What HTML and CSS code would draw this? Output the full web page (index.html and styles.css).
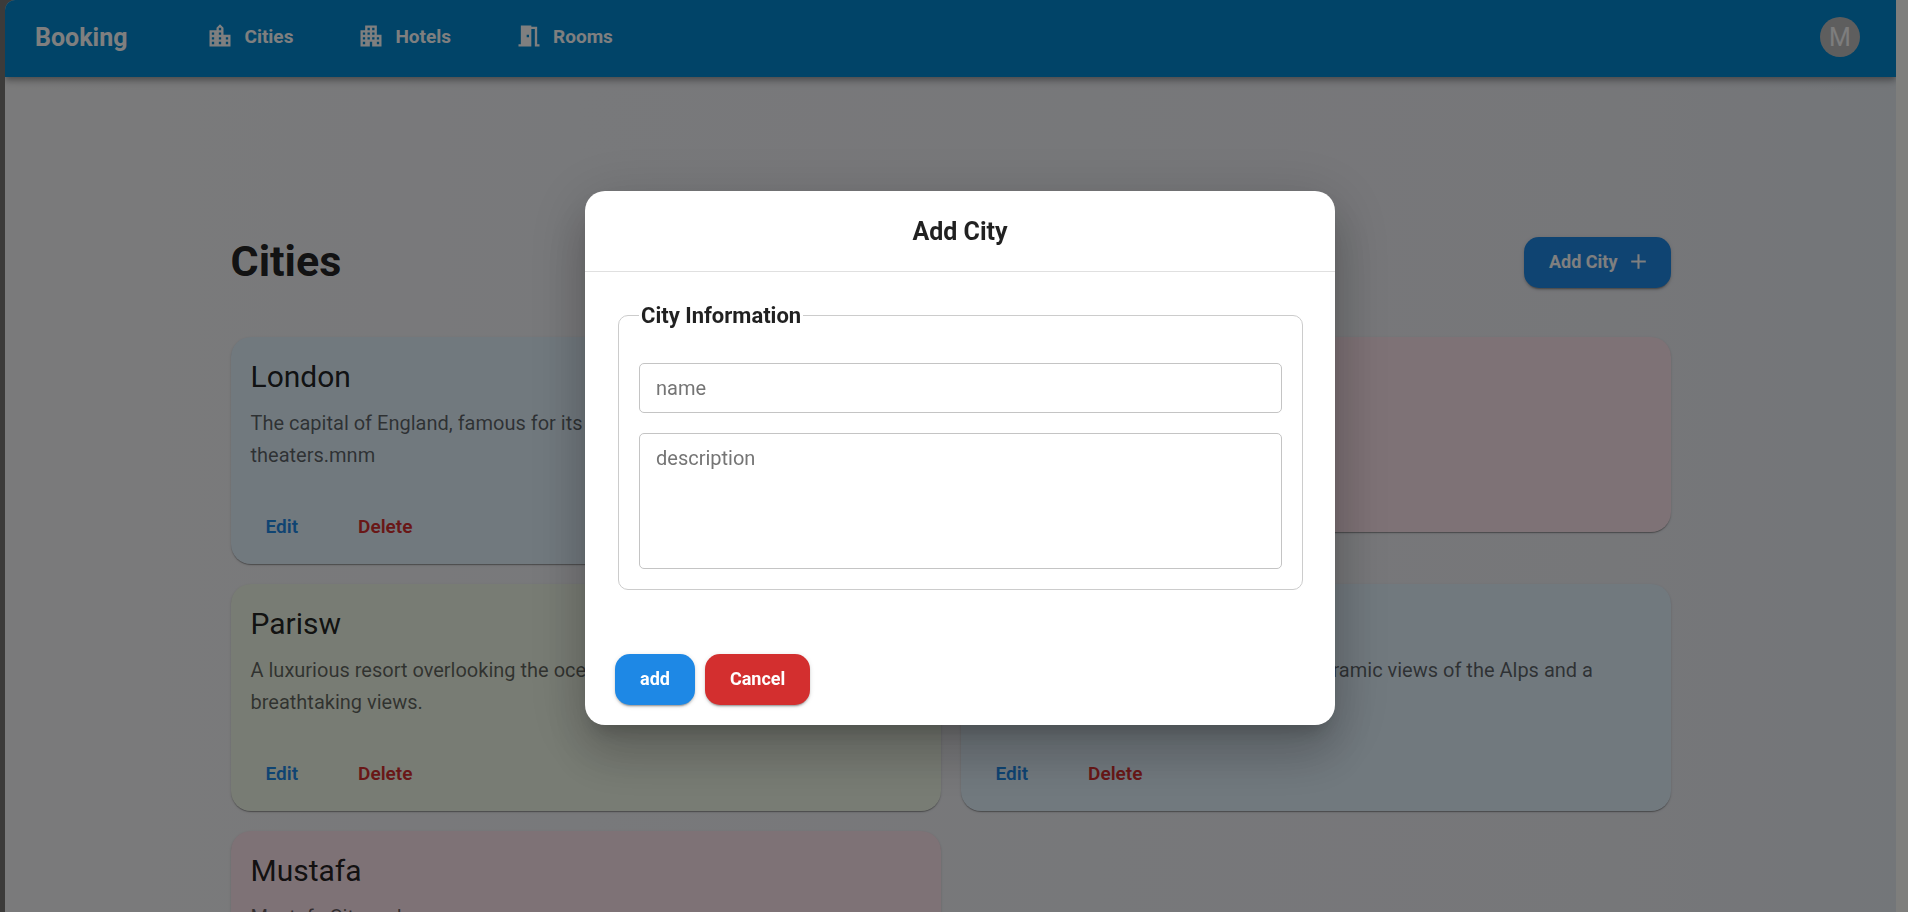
FILE: index.html
```html
<!DOCTYPE html>
<html lang="en">
<head>
<meta charset="utf-8">
<title>Booking</title>
<link rel="stylesheet" href="styles.css">
</head>
<body>
<div class="page">
  <header class="appbar">
    <a class="brand" href="#">Booking</a>
    <nav class="nav">
      <a class="nav-link" href="#"><svg class="icon" viewBox="0 0 24 24"><path d="M15 11V5l-3-3-3 3v2H3v14h18V11h-6zm-8 8H5v-2h2v2zm0-4H5v-2h2v2zm0-4H5V9h2v2zm6 8h-2v-2h2v2zm0-4h-2v-2h2v2zm0-4h-2V9h2v2zm0-4h-2V5h2v2zm6 12h-2v-2h2v2zm0-4h-2v-2h2v2z"/></svg>Cities</a>
      <a class="nav-link" href="#"><svg class="icon" viewBox="0 0 24 24"><path d="M17 11V3H7v4H3v14h8v-4h2v4h8V11h-4zM7 19H5v-2h2v2zm0-4H5v-2h2v2zm0-4H5V9h2v2zm4 4H9v-2h2v2zm0-4H9V9h2v2zm0-4H9V5h2v2zm4 8h-2v-2h2v2zm0-4h-2V9h2v2zm0-4h-2V5h2v2zm4 12h-2v-2h2v2zm0-4h-2v-2h2v2z"/></svg>Hotels</a>
      <a class="nav-link" href="#"><svg class="icon" viewBox="0 0 24 24"><path d="M14 6v15H3v-2h2V3h9v1h5v15h2v2h-4V6h-3zm-4 5v2h2v-2h-2z"/></svg>Rooms</a>
    </nav>
    <button class="avatar" type="button" aria-label="Account">M</button>
  </header>
  <main class="content">
    <div class="heading-row">
      <h1 class="title">Cities</h1>
      <button class="button primary" type="button">Add City<svg class="plus" viewBox="0 0 24 24"><path d="M19 13h-6v6h-2v-6H5v-2h6V5h2v6h6v2z"/></svg></button>
    </div>
    <div class="grid">
      <article class="card blue">
        <div class="card-body"><h2 class="card-title">London</h2><p class="card-text">The capital of England, famous for its history, landmarks, museums, and theaters.mnm</p></div>
        <div class="card-actions"><button class="text-button edit" type="button">Edit</button><button class="text-button delete" type="button">Delete</button></div>
      </article>
      <article class="card pink">
        <div class="card-body"><h2 class="card-title">Rome</h2><p class="card-text">The capital of Italy.</p></div>
        <div class="card-actions"><button class="text-button edit" type="button">Edit</button><button class="text-button delete" type="button">Delete</button></div>
      </article>
      <article class="card green">
        <div class="card-body"><h2 class="card-title">Parisw</h2><p class="card-text">A luxurious resort overlooking the ocean, with a private beach and breathtaking views.</p></div>
        <div class="card-actions"><button class="text-button edit" type="button">Edit</button><button class="text-button delete" type="button">Delete</button></div>
      </article>
      <article class="card blue">
        <div class="card-body"><h2 class="card-title">Zurich</h2><p class="card-text">A peaceful mountain hotel with its panoramic views of the Alps and a traditional spa.</p></div>
        <div class="card-actions"><button class="text-button edit" type="button">Edit</button><button class="text-button delete" type="button">Delete</button></div>
      </article>
      <article class="card pink">
        <div class="card-body"><h2 class="card-title">Mustafa</h2><p class="card-text">Mustafa City and</p></div>
        <div class="card-actions"><button class="text-button edit" type="button">Edit</button><button class="text-button delete" type="button">Delete</button></div>
      </article>
    </div>
  </main>
</div>
<div class="backdrop">
  <form class="dialog" role="dialog" aria-labelledby="dialog-title">
    <h2 class="dialog-title" id="dialog-title">Add City</h2>
    <div class="dialog-content">
      <fieldset class="group">
        <legend class="legend">City Information</legend>
        <input class="field" type="text" placeholder="name" aria-label="name">
        <textarea class="field area" placeholder="description" aria-label="description"></textarea>
      </fieldset>
    </div>
    <div class="dialog-actions">
      <button class="button primary" type="button">add</button>
      <button class="button danger" type="button">Cancel</button>
    </div>
  </form>
</div>
</body>
</html>
```

FILE: styles.css
```css
* { box-sizing: border-box; }
html { height: 100%; background: #787774; }
body {
  margin: 0;
  height: 100%;
  overflow: hidden;
  font-family: Roboto, "Liberation Sans", sans-serif;
  color: rgba(0, 0, 0, 0.87);
}
h1, h2, p { margin: 0; }
button { font-family: inherit; border: 0; cursor: pointer; }
a { color: inherit; text-decoration: none; }

.page {
  height: 100vh;
  overflow: hidden;
  margin: 0 12px 0 5px;
  border-radius: 10px 0 0 0;
  box-shadow: 12px 0 0 #fcfcf9;
  background: linear-gradient(to right, #f5f5f6, #f1f2f6 30%, #edeef3 85%, #e7ecf2);
}

.appbar {
  display: flex;
  align-items: center;
  height: 77px;
  padding: 0 36px 3px 30px;
  color: #fff;
  background: #0288d1;
  box-shadow: 0 3px 5px -1px rgba(0, 0, 0, 0.2), 0 5px 6px rgba(0, 0, 0, 0.14), 0 1px 13px rgba(0, 0, 0, 0.12);
}
.brand { font-size: 25px; font-weight: 700; }
.nav { display: flex; flex: 1; gap: 64px; margin-left: 79px; padding-bottom: 2px; }
.nav-link { display: flex; align-items: center; gap: 10px; font-size: 19px; font-weight: 700; }
.icon { width: 28px; height: 28px; fill: currentColor; }
.avatar {
  width: 40px;
  height: 40px;
  padding: 0;
  border-radius: 50%;
  font-size: 25px;
  color: #fafafa;
  background: #bdbdbd;
}

.content { max-width: 1440px; margin: 0 auto; }
.heading-row { display: flex; align-items: flex-start; justify-content: space-between; margin: 160px 0 49px; }
.title { font-size: 43px; line-height: 48px; font-weight: 700; }

.button {
  display: inline-flex;
  align-items: center;
  gap: 8px;
  height: 51px;
  padding: 0 25px 2px;
  border-radius: 15px;
  font-size: 18px;
  font-weight: 700;
  color: #fff;
  box-shadow: 0 3px 1px -2px rgba(0, 0, 0, 0.2), 0 2px 2px rgba(0, 0, 0, 0.14), 0 1px 5px rgba(0, 0, 0, 0.12);
}
.primary { background: #1e88e5; }
.danger { background: #d32f2f; }
.plus { width: 25px; height: 25px; margin-right: -5px; fill: currentColor; }

.grid { display: grid; grid-template-columns: 1fr 1fr; gap: 20px; align-items: start; }
.card {
  border-radius: 20px;
  box-shadow: 0 2px 1px -1px rgba(0, 0, 0, 0.2), 0 1px 1px rgba(0, 0, 0, 0.14), 0 1px 3px rgba(0, 0, 0, 0.12);
}
.blue { background: #e3f2fd; }
.pink { background: #fce4ec; }
.green { background: #f1f8e9; }
.card-body { padding: 20px; }
.card-title { margin-bottom: 10px; font-size: 30px; line-height: 40px; font-weight: 400; }
.card-text { font-size: 20px; line-height: 32px; color: rgba(0, 0, 0, 0.6); }
.card-actions { display: flex; gap: 10px; padding: 10px; }
.text-button { height: 53px; padding: 0 25px 2px; font-size: 19px; font-weight: 600; background: none; }
.edit { color: #1e88e5; }
.delete { color: #d32f2f; }

.backdrop {
  position: fixed;
  inset: 0;
  display: flex;
  align-items: center;
  justify-content: center;
  padding: 3px 0 0 12px;
  background: rgba(0, 0, 0, 0.5);
}
.dialog {
  width: 750px;
  max-width: 100%;
  border-radius: 20px;
  background: #fff;
  box-shadow: 0 14px 19px -9px rgba(0, 0, 0, 0.2), 0 30px 48px 4px rgba(0, 0, 0, 0.14), 0 11px 58px 10px rgba(0, 0, 0, 0.12);
}
.dialog-title { padding: 21px 30px 19px; font-size: 25px; line-height: 40px; font-weight: 700; text-align: center; }
.dialog-content { padding: 31px 32px 29px 33px; border-top: 1px solid #e0e0e0; }
.group {
  display: flex;
  flex-direction: column;
  gap: 20px;
  margin: 0;
  padding: 34px 20px 20px;
  border: 1px solid #ccc;
  border-radius: 10px;
}
.legend { padding: 0 2px; font-size: 22px; line-height: 26px; font-weight: 700; }
.field {
  display: block;
  width: 100%;
  height: 50px;
  padding: 0 16px;
  border: 1px solid #c4c4c4;
  border-radius: 5px;
  font-family: inherit;
  font-size: 20px;
  color: inherit;
  background: #fff;
}
.field::placeholder { color: #757575; }
.area { height: 136px; padding: 10px 16px; line-height: 28px; resize: none; }
.dialog-actions { display: flex; gap: 10px; padding: 35px 30px 20px; }
```
